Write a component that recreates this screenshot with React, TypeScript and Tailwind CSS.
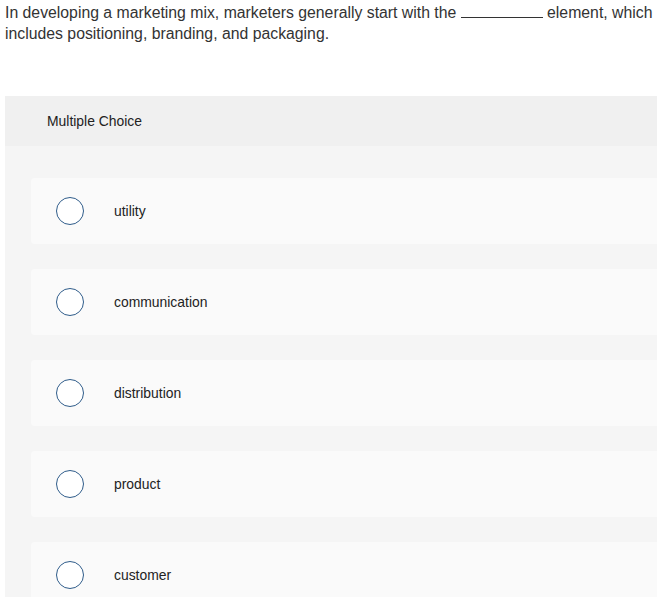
import React from 'react';

const options = ['utility', 'communication', 'distribution', 'product', 'customer'];

const Radio: React.FC = () => (
  <span className="block w-[28px] h-[28px] rounded-full border-[1.5px] border-[#2f5c8a] bg-white shrink-0" />
);

const App: React.FC = () => {
  return (
    <div className="w-[657px] h-[597px] overflow-hidden bg-white text-[#333] font-['Liberation_Sans',Arial,sans-serif]">
      <p className="pl-[5px] pt-[2px] text-[15.8px] leading-[21px]">
        <span className="whitespace-nowrap">
          In developing a marketing mix, marketers generally start with the{' '}
          <span className="inline-block w-[82px] border-b border-[#333] align-baseline" /> element, which
        </span>
        <br />
        includes positioning, branding, and packaging.
      </p>

      <section className="ml-[5px] mt-[52px] bg-[#f5f5f5]">
        <div className="h-[50px] bg-[#f0f0f0] flex items-center pl-[42px] text-[13.9px] text-[#222]">
          Multiple Choice
        </div>
        <div className="flex flex-col gap-[25px] pt-[32px] pl-[26px]">
          {options.map((o) => (
            <div key={o} className="h-[66px] bg-[#fafafa] rounded-l-[4px] flex items-center pl-[25px]">
              <Radio />
              <span className="ml-[30px] text-[13.9px] text-[#222]">{o}</span>
            </div>
          ))}
        </div>
      </section>
    </div>
  );
};

export default App;
